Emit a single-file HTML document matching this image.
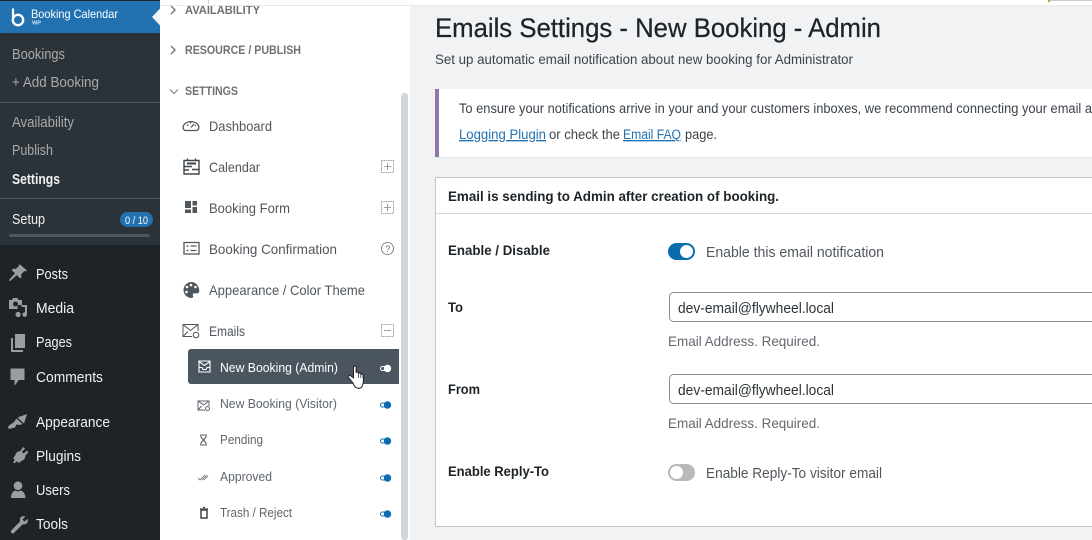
<!DOCTYPE html>
<html lang="en"><head><meta charset="utf-8"><title>Emails Settings</title>
<style>
html,body{margin:0;padding:0;width:1092px;height:540px;overflow:hidden;background:#f0f0f1}
svg{display:block}
text{font-family:"Liberation Sans",sans-serif;white-space:pre}
.wm{font-size:14.5px;fill:#f0f0f1}
.wm2{font-size:14.5px;fill:#a7aaad}
.ni{font-size:14px;fill:#50575c}
.sub{font-size:13px;fill:#5f666d}
.hd{font-size:12px;font-weight:bold;fill:#707070}
.bd{font-size:14.5px;fill:#3c434a}
.lb{font-size:14px;font-weight:bold;fill:#1d2327}
.lnk{fill:#2271b1;text-decoration:underline}
.ic{fill:none;stroke:#50575c;stroke-width:1.3}
.wi{fill:#9a9ea3}
</style></head><body>
<svg xmlns="http://www.w3.org/2000/svg" width="1092" height="540" viewBox="0 0 1092 540">
<rect width="1092" height="540" fill="#f0f2f4"/>
<!-- WP sidebar -->
<rect width="160" height="540" fill="#1d2327"/>
<rect y="33" width="160" height="212" fill="#2c3338"/>
<rect y="1" width="160" height="32" fill="#2271b1"/>
<path d="M160 8.500L152 17L160 25.500Z" fill="#f0f2f4"/>
<path d="M13 8.500V19" stroke="#fff" stroke-width="2.200" fill="none"/>
<circle cx="18" cy="20" r="5.200" fill="none" stroke="#fff" stroke-width="2.400"/>
<text x="31" y="18" font-size="12" fill="#fff" textLength="87" lengthAdjust="spacingAndGlyphs">Booking Calendar</text>
<text x="32" y="24.500" font-size="5.500" font-weight="bold" fill="#cfe3f3" textLength="9" lengthAdjust="spacingAndGlyphs">WP</text>
<text class="wm2" x="12" y="59" textLength="53" lengthAdjust="spacingAndGlyphs">Bookings</text>
<text class="wm2" x="12" y="87" textLength="87" lengthAdjust="spacingAndGlyphs">+ Add Booking</text>
<rect y="102" width="160" height="1" fill="#50565b"/>
<text class="wm2" x="12" y="127" textLength="62" lengthAdjust="spacingAndGlyphs">Availability</text>
<text class="wm2" x="12" y="155" textLength="41" lengthAdjust="spacingAndGlyphs">Publish</text>
<text class="wm" x="12" y="184" font-weight="bold" textLength="48" lengthAdjust="spacingAndGlyphs" fill="#fff">Settings</text>
<rect y="198" width="160" height="1" fill="#50565b"/>
<text class="wm" x="12" y="224" textLength="33" lengthAdjust="spacingAndGlyphs">Setup</text>
<rect x="120" y="212" width="33" height="15" rx="7.500" fill="#2271b1"/>
<text x="125" y="224" font-size="11" fill="#fff" textLength="23" lengthAdjust="spacingAndGlyphs">0 / 10</text>
<rect x="9" y="234" width="141" height="3" rx="1.500" fill="#50565b"/>
<!-- WP icons -->
<path class="wi" d="M20 264.500l7 6-1.600 1-1-.5-3.200 3.200.2 3-1.300 1.200-3.300-3.300-6 5.400-1.800.6.600-1.800 5.400-6-3.300-3.300 1.200-1.300 3 .2 3.200-3.200-.5-1z"/>
<path class="wi" fill-rule="evenodd" d="M9 300h3l1-2h4.500l1 2H22v5h-3.500l-1 1v3H9zM15.500 301.500a2.500 2.500 0 1 0 .01 0z"/>
<path class="wi" d="M19.500 305H27v9.500a2.300 2.300 0 1 1-2-2.200V307h-3.500v-2zM15.500 314.500a2.600 2.600 0 1 1 5.200 0 2.600 2.600 0 0 1-5.200 0z"/>
<path class="wi" d="M15 334h10v14H15zM11 338h2v12h10v2H11z"/>
<path class="wi" d="M11 369h13v10.500h-5.500l-3.500 5v-5h-4z" stroke="#9a9ea3" stroke-width="1" stroke-linejoin="round"/>
<path class="wi" d="M17.500 417.500L27 414l-3 9.500zM16.500 418.500l6 5.500-3 1-3-.5-1.500 3-6 1.500-1-1.500 1-2 5-3.500z"/>
<path class="wi" d="M23 447l2 1.500-3.200 3.500 2 1.500 3-3 1.600 1.700-3.200 3.400c.5 2-1 4.600-3.600 5.200l-1.400 1.500-1.700.5-1.600-1.500-2.500 2-1.300-.7 1.700-2.700-1.500-1.300.5-1.600 1.500-1.600c.4-2.600 2.600-4.500 5-4.200z"/>
<path class="wi" d="M18 481.500a4.300 4.300 0 1 1-.01 0zM11 498c0-4.500 2-7 4.500-7.500 1.500 1.200 3.500 1.200 5 0 2.500.5 5 3 5 7.500z"/>
<path class="wi" d="M25.500 516.500c-1.900-.8-4.600-.2-5.400 2-.4 1.200-.3 2.300 0 3l-9 9c-1 1.600 1 3.800 2.600 2.700l9-9c3.200 1 6.200-1.900 4.800-5.300l-3 2.700-2.200-2.200z"/>
<text class="wm" x="36" y="279" textLength="32" lengthAdjust="spacingAndGlyphs">Posts</text>
<text class="wm" x="36" y="313" textLength="38" lengthAdjust="spacingAndGlyphs">Media</text>
<text class="wm" x="36" y="347" textLength="36" lengthAdjust="spacingAndGlyphs">Pages</text>
<text class="wm" x="36" y="382" textLength="67" lengthAdjust="spacingAndGlyphs">Comments</text>
<text class="wm" x="36" y="427" textLength="74" lengthAdjust="spacingAndGlyphs">Appearance</text>
<text class="wm" x="36" y="461" textLength="45" lengthAdjust="spacingAndGlyphs">Plugins</text>
<text class="wm" x="36" y="495" textLength="34" lengthAdjust="spacingAndGlyphs">Users</text>
<text class="wm" x="36" y="529" textLength="32" lengthAdjust="spacingAndGlyphs">Tools</text>
<!-- Nav panel -->
<rect x="160" width="250" height="540" fill="#fff"/>
<rect x="401" y="93" width="7" height="447" rx="3" fill="#d1d6dc"/>
<path d="M171 6l4 4-4 4M171 46l4 4-4 4" fill="none" stroke="#777" stroke-width="1.400"/>
<path d="M170 89.500l4 4 4-4" fill="none" stroke="#888" stroke-width="1.200"/>
<text class="hd" x="185" y="14" textLength="75" lengthAdjust="spacingAndGlyphs">AVAILABILITY</text>
<text class="hd" x="185" y="54" textLength="116" lengthAdjust="spacingAndGlyphs">RESOURCE / PUBLISH</text>
<text class="hd" x="185" y="95" textLength="53" lengthAdjust="spacingAndGlyphs">SETTINGS</text>
<path class="ic" d="M185 130.500c-2-1.200-2-3.500-1.500-5a8 6 0 0 1 15 0c.5 1.500.5 3.800-1.500 5zM191 127.500l3-3.500M187 125l1.500.5M190.500 122v1.500M196 125l-1 .5"/>
<path d="M184 160.500h15v13.500h-15zM184 166.500h8M192 169.500h7M184 170h5" fill="none" stroke="#3f464c" stroke-width="1.400"/>
<path d="M187.500 158.500v2M195.500 158.500v2" stroke="#3f464c" stroke-width="1.400"/><rect x="187" y="162.500" width="9" height="2" fill="#3f464c"/>
<path d="M185 201h6v7h-6zM192.500 201h4.500v4.500h-4.500zM192.500 207h4.500v6h-4.500zM185 209.500h6v3.500h-6z" fill="#50575c"/>
<path class="ic" d="M184 242.500h15v11.500h-15zM186.500 246h2M190.500 246h6M186.500 250.500h2M190.500 250.500h6"/>
<path d="M191.500 282a8 8 0 1 0 0 16c1.500 0 2-1 1.500-2.200-.5-1.500.3-2.500 1.800-2.500h2.500c1.200 0 2-1 2-2.300 0-5-3.500-9-7.800-9z" fill="#50575c"/>
<circle cx="187" cy="287" r="1.300" fill="#fff"/><circle cx="191" cy="285" r="1.300" fill="#fff"/><circle cx="195.500" cy="287" r="1.300" fill="#fff"/><circle cx="186.500" cy="292" r="1.300" fill="#fff"/>
<path d="M198 331v-6.500h-15v12h9M183 324.500l7.500 6 7.500-6M183 336.500l5-5" fill="none" stroke="#50575c" stroke-width="1"/>
<circle cx="196" cy="335" r="2.800" fill="none" stroke="#50575c" stroke-width="1"/>
<text class="ni" x="209" y="131" textLength="63" lengthAdjust="spacingAndGlyphs">Dashboard</text>
<text class="ni" x="209" y="172" textLength="51" lengthAdjust="spacingAndGlyphs">Calendar</text>
<text class="ni" x="209" y="213" textLength="81" lengthAdjust="spacingAndGlyphs">Booking Form</text>
<text class="ni" x="209" y="254" textLength="128" lengthAdjust="spacingAndGlyphs">Booking Confirmation</text>
<text class="ni" x="209" y="295" textLength="156" lengthAdjust="spacingAndGlyphs">Appearance / Color Theme</text>
<text class="ni" x="209" y="336" textLength="36" lengthAdjust="spacingAndGlyphs">Emails</text>
<g fill="none" stroke="#888" stroke-width=".8">
<rect x="381.500" y="160.500" width="12" height="12" stroke-dasharray="1.500 .7"/><path d="M384 166.500h7M387.500 163v7"/>
<rect x="381.500" y="201.500" width="12" height="12" stroke-dasharray="1.500 .7"/><path d="M384 207.500h7M387.500 204v7"/>
<circle cx="387.500" cy="248.500" r="6" stroke="#666"/>
<rect x="381.500" y="324.500" width="12" height="12" stroke-dasharray="1.500 .7"/><path d="M384 330.500h7"/>
</g>
<text x="385.200" y="252" font-size="9" fill="#666">?</text>
<path d="M191 349H399V384H191a3 3 0 0 1-3-3V352a3 3 0 0 1 3-3z" fill="#4a5560"/>
<path d="M199 361h11v11h-11zM199 367.500h3l1 2h3l1-2h3M199 361.500l5.500 4 5.500-4" fill="none" stroke="#fff" stroke-width="1.100"/>
<path d="M209 406v-5h-11v9h7M198 401l5.500 4 5.500-4M198 410l3.500-4" fill="none" stroke="#5f666d" stroke-width="1"/><circle cx="207.500" cy="408.500" r="2" fill="none" stroke="#5f666d"/>
<path d="M200 435h7M200 445h7M201 435v2l2.500 3-2.500 3v2M206 435v2l-2.500 3 2.500 3v2" fill="none" stroke="#5f666d" stroke-width="1.100"/>
<path d="M198 478l2 2 5-5M202 480l5-5M204 480l4-4" fill="none" stroke="#5f666d" stroke-width=".8"/>
<path d="M201 510h6v8h-6z" fill="none" stroke="#3f464c" stroke-width="1.500"/><path d="M200 509h8M203 507.500h2" stroke="#3f464c" stroke-width="1.200"/>
<text x="220" y="372" font-size="13" fill="#fff" textLength="118" lengthAdjust="spacingAndGlyphs">New Booking (Admin)</text>
<text class="sub" x="220" y="408" textLength="117" lengthAdjust="spacingAndGlyphs">New Booking (Visitor)</text>
<text class="sub" x="220" y="444" textLength="43" lengthAdjust="spacingAndGlyphs">Pending</text>
<text class="sub" x="220" y="481" textLength="52" lengthAdjust="spacingAndGlyphs">Approved</text>
<text class="sub" x="220" y="517" textLength="72" lengthAdjust="spacingAndGlyphs">Trash / Reject</text>
<g>
<rect x="380.500" y="366.500" width="10" height="4" rx="2" fill="none" stroke="#fff"/><circle cx="387.500" cy="368.500" r="3.700" fill="#fff"/>
<rect x="380.500" y="403" width="10" height="4" rx="2" fill="none" stroke="#1a76b8"/><circle cx="387.500" cy="405" r="3.700" fill="#0b6db0"/>
<rect x="380.500" y="439" width="10" height="4" rx="2" fill="none" stroke="#1a76b8"/><circle cx="387.500" cy="441" r="3.700" fill="#0b6db0"/>
<rect x="380.500" y="476" width="10" height="4" rx="2" fill="none" stroke="#1a76b8"/><circle cx="387.500" cy="478" r="3.700" fill="#0b6db0"/>
<rect x="380.500" y="512" width="10" height="4" rx="2" fill="none" stroke="#1a76b8"/><circle cx="387.500" cy="514" r="3.700" fill="#0b6db0"/>
</g>
<path d="M353 383l-4.500-5.500c-1-1.500 1-2.800 2.200-1.600l2.800 2v-10.500c0-1.800 2.600-1.800 2.600 0v5.500c.2-1.400 2.300-1.400 2.500 0v1c.2-1.300 2.300-1.300 2.400 0v1c.3-1 2.400-1 2.400.4v5.500c0 3-1.500 6-1.500 6-1.800 2.400-7 2.400-8.900-3.800z" fill="#fff" stroke="#222" stroke-width="1"/>
<path d="M358.300 373v5M360.800 374v4M363 375v3" stroke="#222" stroke-width=".7" fill="none"/>
<!-- Top bar -->
<rect width="1092" height="5" x="160" fill="#fff"/>
<rect x="160" y="5" width="932" height="1" fill="#e8e9ea"/>
<rect x="208" width="1" height="4" fill="#ccc"/>
<rect x="1048" width="2" height="2" fill="#8db93e"/>
<rect x="1050" width="42" height="1" fill="#ccc"/>
<!-- Main -->
<text x="435" y="37" font-size="27" fill="#1d2327" stroke="#1d2327" stroke-width=".25" textLength="446" lengthAdjust="spacingAndGlyphs">Emails Settings - New Booking - Admin</text>
<text class="bd" x="435" y="64" textLength="418" lengthAdjust="spacingAndGlyphs" style="font-size:13.5px">Set up automatic email notification about new booking for Administrator</text>
<rect x="435" y="89" width="657" height="68" fill="#fff"/>
<rect x="435" y="157" width="657" height="1" fill="#e4e5e7"/>
<rect x="435" y="89" width="4" height="68" fill="#9077a8"/>
<text x="459" y="113" font-size="13.500" fill="#3c434a" textLength="633" lengthAdjust="spacingAndGlyphs">To ensure your notifications arrive in your and your customers inboxes, we recommend connecting your email a</text>
<text x="459" y="139" font-size="13.500" class="lnk" textLength="87" lengthAdjust="spacingAndGlyphs">Logging Plugin</text>
<text x="549" y="139" font-size="13.500" fill="#3c434a" textLength="71" lengthAdjust="spacingAndGlyphs">or check the</text>
<text x="623" y="139" font-size="13.500" class="lnk" textLength="58" lengthAdjust="spacingAndGlyphs">Email FAQ</text>
<text x="685" y="139" font-size="13.500" fill="#3c434a" textLength="32" lengthAdjust="spacingAndGlyphs">page.</text>
<rect x="435.500" y="177.500" width="700" height="349" fill="#fff" stroke="#c3c4c7"/>
<rect x="436" y="213" width="656" height="1" fill="#d5d6d8"/>
<text class="lb" x="448" y="201" textLength="331" lengthAdjust="spacingAndGlyphs">Email is sending to Admin after creation of booking.</text>
<text class="lb" x="448" y="255" textLength="102" lengthAdjust="spacingAndGlyphs">Enable / Disable</text>
<text class="lb" x="448" y="312" textLength="15" lengthAdjust="spacingAndGlyphs">To</text>
<text class="lb" x="448" y="394" textLength="32" lengthAdjust="spacingAndGlyphs">From</text>
<text class="lb" x="448" y="476" textLength="101" lengthAdjust="spacingAndGlyphs">Enable Reply-To</text>
<rect x="668" y="243" width="27" height="17" rx="8.500" fill="#0b6cab"/><circle cx="686.500" cy="251.500" r="6.500" fill="#fff"/>
<text class="bd" x="706" y="257" textLength="178" lengthAdjust="spacingAndGlyphs" style="fill:#50575c">Enable this email notification</text>
<rect x="669.500" y="292.500" width="500" height="29" rx="4" fill="#fff" stroke="#8c8f94"/>
<text class="bd" x="678" y="313" textLength="156" lengthAdjust="spacingAndGlyphs" style="fill:#2c3338">dev-email@flywheel.local</text>
<text x="668" y="346" font-size="14" fill="#646970" textLength="152" lengthAdjust="spacingAndGlyphs">Email Address. Required.</text>
<rect x="669.500" y="374.500" width="500" height="29" rx="4" fill="#fff" stroke="#8c8f94"/>
<text class="bd" x="678" y="395" textLength="156" lengthAdjust="spacingAndGlyphs" style="fill:#2c3338">dev-email@flywheel.local</text>
<text x="668" y="428" font-size="14" fill="#646970" textLength="152" lengthAdjust="spacingAndGlyphs">Email Address. Required.</text>
<rect x="668" y="464" width="27" height="17" rx="8.500" fill="#b8b9bb"/><circle cx="676.500" cy="472.500" r="6.500" fill="#fff"/>
<text class="bd" x="706" y="478" textLength="176" lengthAdjust="spacingAndGlyphs" style="fill:#50575c">Enable Reply-To visitor email</text>
</svg>
</body></html>
